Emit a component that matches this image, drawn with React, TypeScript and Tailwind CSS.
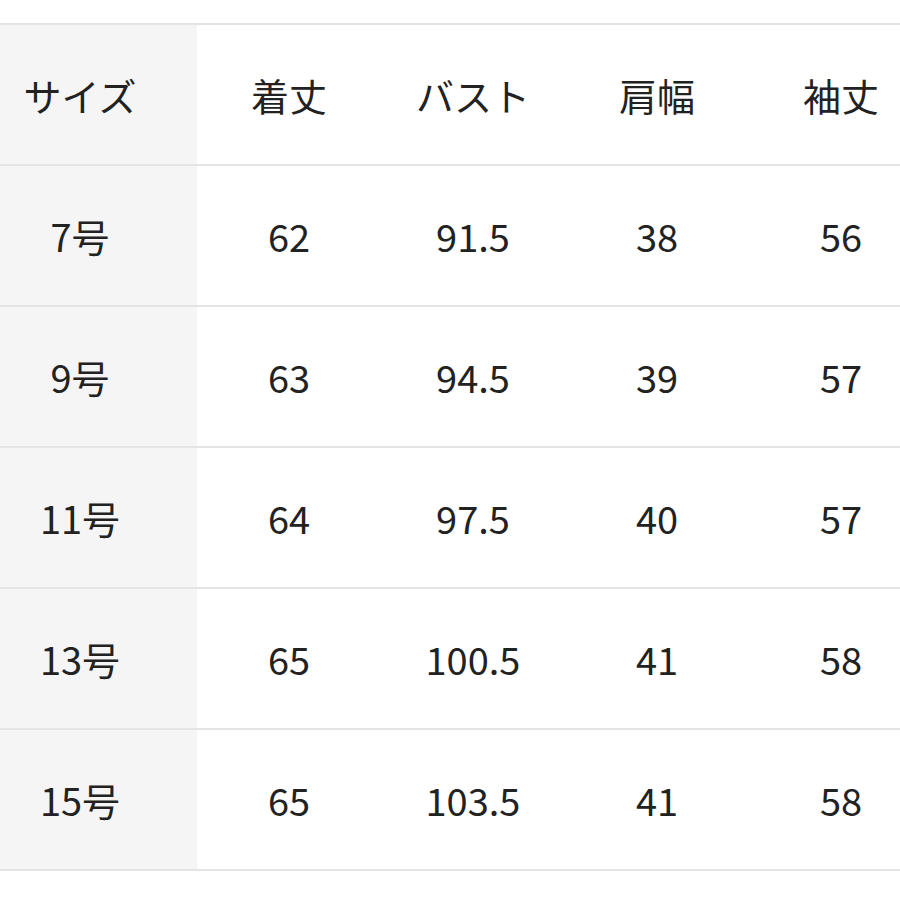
import React from "react";

const header = ["サイズ", "着丈", "バスト", "肩幅", "袖丈"];
const rows = [
  ["7号", "62", "91.5", "38", "56"],
  ["9号", "63", "94.5", "39", "57"],
  ["11号", "64", "97.5", "40", "57"],
  ["13号", "65", "100.5", "41", "58"],
  ["15号", "65", "103.5", "41", "58"],
];

export default function App() {
  const all = [header, ...rows];
  return (
    <div
      className="w-[900px] h-[900px] bg-white overflow-hidden pt-[23px]"
      style={{ fontFamily: '"Noto Sans CJK JP", "Noto Sans", sans-serif' }}
    >
      <div className="w-[933px] border-t-2 border-[#e4e4e4]">
        {all.map((r, i) => (
          <div
            key={i}
            className="grid grid-cols-[197px_184px_184px_184px_184px] h-[141px] border-b-2 border-[#e4e4e4] text-[38px] text-[#222222] leading-none"
          >
            {r.map((c, j) => (
              <div
                key={j}
                className={
                  j === 0
                    ? "bg-[#f5f5f5] flex items-center justify-center pr-[37px]"
                    : "flex items-center justify-center"
                }
              >
                {c}
              </div>
            ))}
          </div>
        ))}
      </div>
    </div>
  );
}
